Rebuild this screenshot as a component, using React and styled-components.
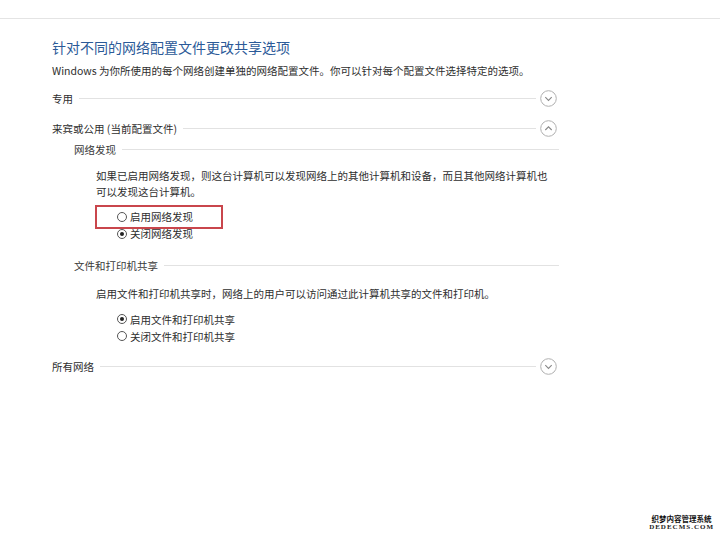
import React from "react";
import styled, { createGlobalStyle } from "styled-components";

const Global = createGlobalStyle`
  html, body { margin: 0; padding: 0; background: #fff; }
  body { font-family: "Noto Sans CJK SC", "Noto Sans", sans-serif; color: #333; }
`;

const Page = styled.div`
  position: relative;
  width: 720px;
  height: 538px;
  overflow: hidden;
  background: #fff;
`;

const TopRule = styled.div`
  margin-top: 18px;
  height: 1px;
  background: #e4e4e4;
`;

const Content = styled.div`
  padding-left: 52px;
  width: 505px;
`;

const Title = styled.h1`
  margin: 18px 0 0;
  font-size: 14px;
  line-height: 20px;
  font-weight: 400;
  color: #2b5a98;
  white-space: nowrap;
`;

const Subtitle = styled.p`
  margin: 6px 0 0;
  font-size: 10.5px;
  line-height: 16px;
  color: #2e2e2e;
  white-space: nowrap;
`;

const HeadRow = styled.div`
  display: flex;
  align-items: center;
  height: 20px;
  margin-top: ${(p) => p.$mt}px;
  margin-left: ${(p) => p.$indent || 0}px;
  margin-right: ${(p) => (p.$sub ? -6 : 0)}px;
  font-size: 10.5px;
  color: ${(p) => (p.$sub ? "#3a3a3a" : "#2e2e2e")};
  white-space: nowrap;
`;

const Rule = styled.span`
  flex: 1;
  height: 1px;
  background: #e2e2e2;
  margin: 0 4px 0 6px;
`;

const Para = styled.p`
  margin: ${(p) => p.$mt}px 0 0 44px;
  font-size: 10.5px;
  line-height: 16px;
  color: #2e2e2e;
  width: 455px;
`;

const RadioList = styled.div`
  position: relative;
  margin: ${(p) => p.$mt}px 0 0 65px;
  display: flex;
  flex-direction: column;
`;

const RadioRow = styled.label`
  display: flex;
  align-items: center;
  gap: 3px;
  height: 17px;
  font-size: 10.5px;
  color: #2e2e2e;
  white-space: nowrap;
`;

const RadioDot = styled.span`
  width: 10px;
  height: 10px;
  box-sizing: border-box;
  border-radius: 50%;
  border: 1px solid #555;
  background: #fff;
  display: inline-flex;
  align-items: center;
  justify-content: center;
  &::after {
    content: "";
    width: 4px;
    height: 4px;
    border-radius: 50%;
    background: ${(p) => (p.$on ? "#222" : "transparent")};
  }
`;

const Highlight = styled.div`
  position: absolute;
  left: -22px;
  top: -3px;
  width: 128px;
  height: 24px;
  box-sizing: border-box;
  border: 2px solid #c9464c;
  pointer-events: none;
`;

const Watermark = styled.div`
  position: absolute;
  right: 6px;
  bottom: 6px;
  display: flex;
  flex-direction: column;
  align-items: center;
  line-height: 9px;
`;

const WmCn = styled.span`
  font-size: 7.5px;
  font-weight: 700;
  color: #111;
  font-family: "Noto Sans CJK SC", sans-serif;
`;

const WmEn = styled.span`
  font-size: 7px;
  letter-spacing: 1px;
  color: #222;
  font-family: "Liberation Serif", serif;
  font-weight: 700;
`;

function Chevron({ up }) {
  return (
    <svg width="17" height="17" viewBox="0 0 17 17">
      <circle cx="8.5" cy="8.5" r="7.8" fill="#fff" stroke="#b0b0b0" strokeWidth="1" />
      {up ? (
        <polyline points="5.3,10 8.5,6.8 11.7,10" fill="none" stroke="#888" strokeWidth="1.1" />
      ) : (
        <polyline points="5.3,7.2 8.5,10.4 11.7,7.2" fill="none" stroke="#888" strokeWidth="1.1" />
      )}
    </svg>
  );
}

function Radio({ on, children }) {
  return (
    <RadioRow>
      <RadioDot $on={on} />
      {children}
    </RadioRow>
  );
}

export default function App() {
  return (
    <Page>
      <Global />
      <TopRule />
      <Content>
        <Title>针对不同的网络配置文件更改共享选项</Title>
        <Subtitle>
          Windows 为你所使用的每个网络创建单独的网络配置文件。你可以针对每个配置文件选择特定的选项。
        </Subtitle>

        <HeadRow $mt={9}>
          专用
          <Rule />
          <Chevron />
        </HeadRow>

        <HeadRow $mt={10}>
          来宾或公用 (当前配置文件)
          <Rule />
          <Chevron up />
        </HeadRow>

        <HeadRow $mt={1} $indent={22} $sub>
          网络发现
          <Rule />
        </HeadRow>
        <Para $mt={9}>
          如果已启用网络发现，则这台计算机可以发现网络上的其他计算机和设备，而且其他网络计算机也可以发现这台计算机。
        </Para>
        <RadioList $mt={8}>
          <Radio>启用网络发现</Radio>
          <Radio on>关闭网络发现</Radio>
          <Highlight />
        </RadioList>

        <HeadRow $mt={13} $indent={22} $sub>
          文件和打印机共享
          <Rule />
        </HeadRow>
        <Para $mt={11}>
          启用文件和打印机共享时，网络上的用户可以访问通过此计算机共享的文件和打印机。
        </Para>
        <RadioList $mt={8.5}>
          <Radio on>启用文件和打印机共享</Radio>
          <Radio>关闭文件和打印机共享</Radio>
        </RadioList>

        <HeadRow $mt={12}>
          所有网络
          <Rule />
          <Chevron />
        </HeadRow>
      </Content>
      <Watermark>
        <WmCn>织梦内容管理系统</WmCn>
        <WmEn>DEDECMS.COM</WmEn>
      </Watermark>
    </Page>
  );
}
